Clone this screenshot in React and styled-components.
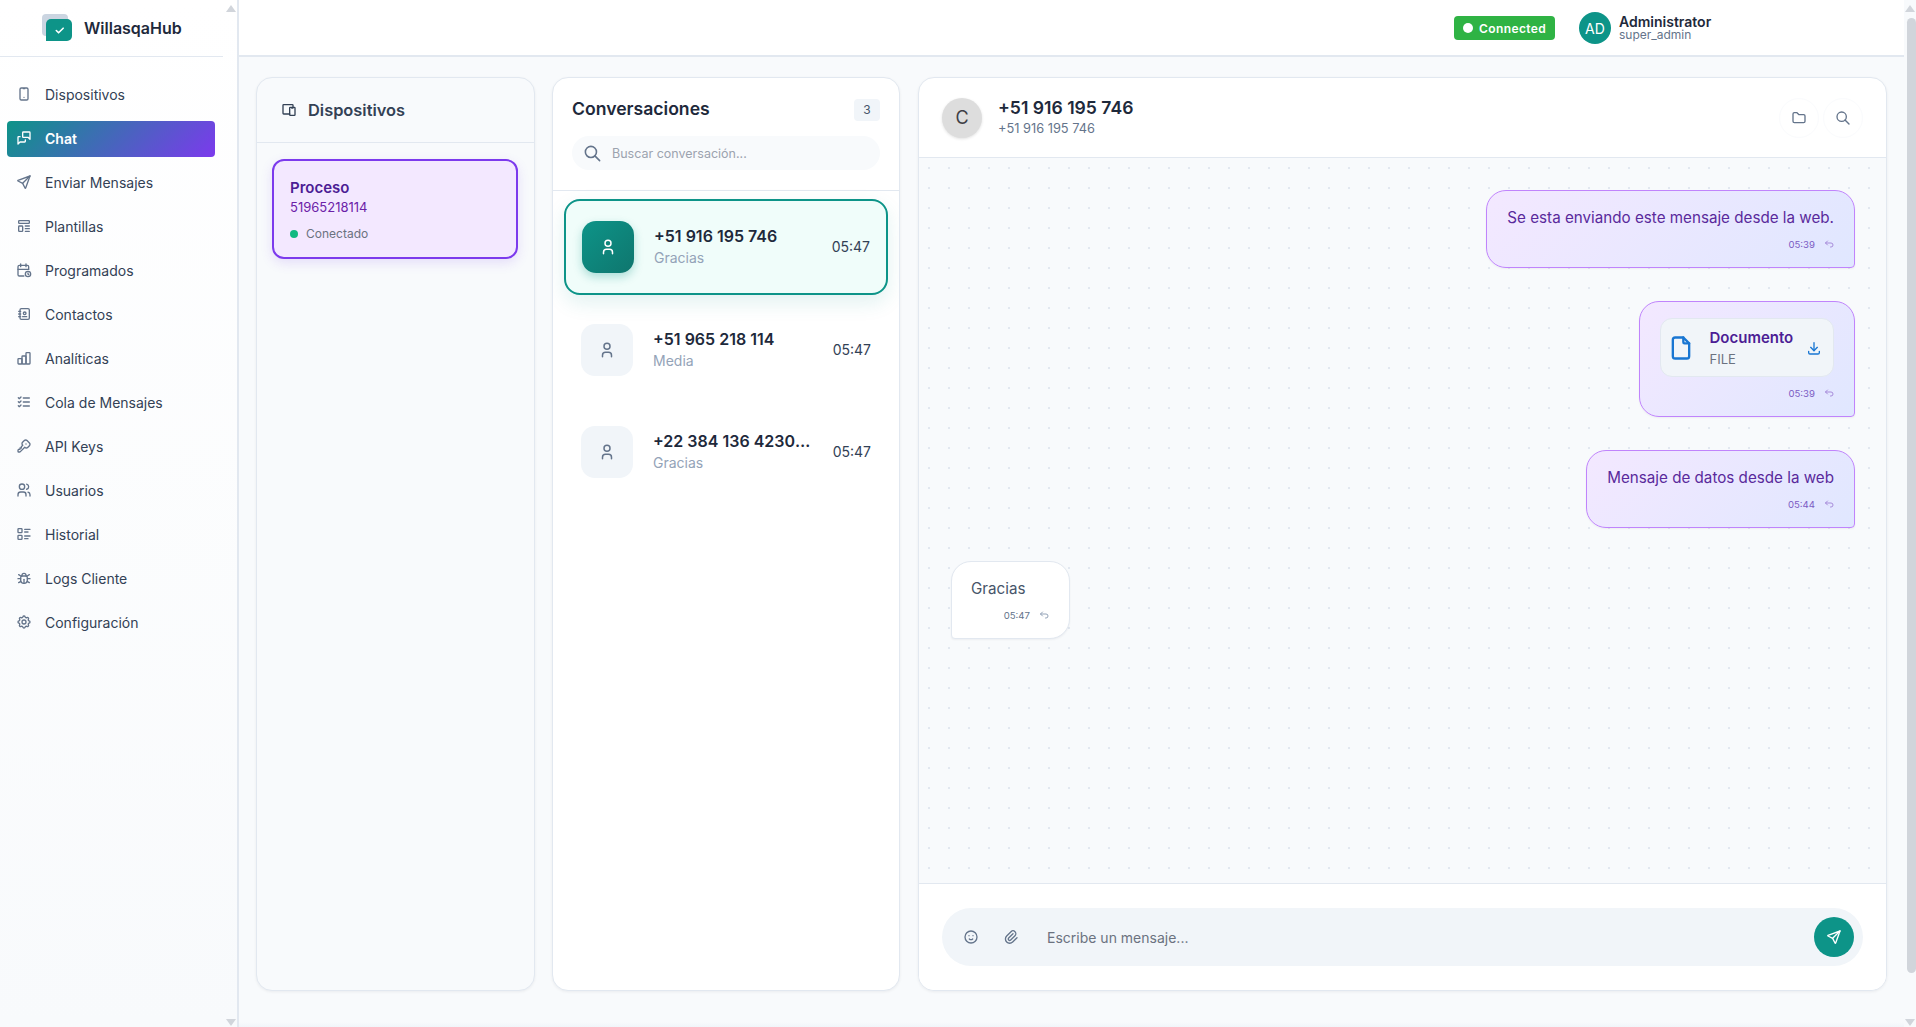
import React from 'react';
import styled, {createGlobalStyle} from 'styled-components';
import {
  TbDeviceMobile, TbMessages, TbSend, TbTemplate, TbCalendarTime, TbAddressBook,
  TbListCheck, TbKey, TbUsers, TbListDetails, TbBug, TbSettings,
  TbDevices, TbFolder, TbSearch, TbMoodSmile, TbPaperclip, TbUser, TbDownload,
  TbFile, TbArrowBackUp, TbCheck
} from 'react-icons/tb';

const GlobalStyle = createGlobalStyle`
  * { box-sizing: border-box; }
  html, body { margin: 0; height: 100%; overflow: hidden; }
  body {
    font-family: Inter, "Noto Sans", "Liberation Sans", sans-serif;
    background: #f8fafc;
    color: #1e293b;
  }
  input { font-family: inherit; }
`;

const Shell = styled.div`
  display: flex;
  height: 100vh;
`;

const Sidebar = styled.aside`
  width: 239px;
  flex: none;
  display: flex;
  background: linear-gradient(180deg, #ffffff 0%, #f8fafc 100%);
  border-right: 2px solid #e2e8f0;
`;

const SideInner = styled.div`
  width: 225px;
  flex: none;
`;

const Brand = styled.div`
  height: 57px;
  margin-right: 2px;
  display: flex;
  align-items: center;
  padding-left: 42px;
  gap: 12px;
  border-bottom: 1px solid #e2e8f0;
`;

const LogoMark = styled.div`
  position: relative;
  width: 30px;
  height: 27px;
  flex: none;
  margin-top: -1px;
  &::before {
    content: '';
    position: absolute;
    left: 0;
    top: 0;
    width: 26px;
    height: 22px;
    border-radius: 4px;
    background: #cbd5e1;
  }
`;

const LogoFront = styled.div`
  position: absolute;
  left: 4px;
  top: 5px;
  width: 26px;
  height: 22px;
  border-radius: 5px 5px 5px 0;
  background: #0d9488;
  color: #fff;
  display: flex;
  align-items: center;
  justify-content: center;
  font-size: 11px;
`;

const BrandName = styled.span`
  font-size: 16px;
  font-weight: 600;
  color: #1e293b;
`;

const Nav = styled.nav`
  display: flex;
  flex-direction: column;
  gap: 8px;
  padding: 20px 10px 0 7px;
`;

const NavItem = styled.a`
  height: 36px;
  display: flex;
  align-items: center;
  gap: 13px;
  padding: 0 9px 2px;
  border-radius: 4px;
  font-size: 14px;
  font-weight: ${p => (p.$active ? 600 : 400)};
  color: ${p => (p.$active ? '#ffffff' : '#334155')};
  background: ${p => (p.$active ? 'linear-gradient(135deg, #0d9488 0%, #7c3aed 100%)' : 'transparent')};
  svg { font-size: 16px; flex: none; color: ${p => (p.$active ? '#ffffff' : '#64748b')}; }
`;

const Rail = styled.div`
  width: ${p => p.$width}px;
  flex: none;
  display: flex;
  flex-direction: column;
  align-items: center;
  padding: 5px 0 1px;
  background: ${p => p.$bg || 'transparent'};
`;

const Arrow = styled.div`
  width: 0;
  height: 0;
  flex: none;
  border-left: 5px solid transparent;
  border-right: 5px solid transparent;
  ${p => (p.$down
    ? 'border-top: 7px solid #d1d5db; margin-top: auto;'
    : 'border-bottom: 7px solid #d1d5db;')}
`;

const Thumb = styled.div`
  width: 9px;
  height: 955px;
  margin: 6px 0 0 3px;
  flex: none;
  border-radius: 5px;
  background: #d1d5db;
`;

const Main = styled.div`
  flex: 1;
  min-width: 0;
  display: flex;
  flex-direction: column;
  background: linear-gradient(180deg, #f8fafc calc(100% - 5px), #f1f5f9 100%);
`;

const TopBar = styled.header`
  height: 57px;
  flex: none;
  background: #fff;
  border-bottom: 2px solid #e2e8f0;
  display: flex;
  align-items: center;
  justify-content: flex-end;
  padding: 1px 190px 0 0;
`;

const StatusBadge = styled.div`
  width: 101px;
  height: 24px;
  margin-right: 24px;
  display: flex;
  align-items: center;
  gap: 6px;
  padding-left: 9px;
  border-radius: 4px;
  background: #2fb344;
  color: #fff;
  font-size: 12px;
  font-weight: 600;
  letter-spacing: 0.4px;
`;

const StatusDot = styled.span`
  width: 10px;
  height: 10px;
  border-radius: 50%;
  background: #fff;
`;

const UserBox = styled.div`
  display: flex;
  align-items: center;
  gap: 8px;
`;

const UserAvatar = styled.div`
  width: 32px;
  height: 32px;
  border-radius: 50%;
  background: #0d9488;
  color: #fff;
  display: flex;
  align-items: center;
  justify-content: center;
  font-size: 14px;
`;

const UserText = styled.div`
  width: 95px;
  display: flex;
  flex-direction: column;
`;

const UserName = styled.span`
  font-size: 14px;
  font-weight: 600;
  line-height: 14px;
  color: #1e293b;
`;

const UserRole = styled.span`
  font-size: 12px;
  line-height: 12px;
  color: #64748b;
`;

const Content = styled.main`
  flex: 1;
  min-height: 0;
  display: grid;
  grid-template-columns: 279px 348px 1fr;
  column-gap: 17px;
  padding: 20px 17px 36px;
`;

const Panel = styled.section`
  min-height: 0;
  display: flex;
  flex-direction: column;
  overflow: hidden;
  border: 1px solid #e2e8f0;
  border-radius: 16px;
  background: ${p => (p.$muted ? '#f8fafc' : '#ffffff')};
  box-shadow: 0 1px 3px rgba(15, 23, 42, 0.06);
`;

const ChatPanel = styled(Panel)`
  margin-left: 1px;
`;

const DeviceHeader = styled.div`
  height: 65px;
  flex: none;
  display: flex;
  align-items: center;
  gap: 11px;
  padding-left: 24px;
  border-bottom: 1px solid #e2e8f0;
  font-size: 16.4px;
  font-weight: 600;
  color: #334155;
  svg { font-size: 16px; }
`;

const DeviceCard = styled.div`
  height: 100px;
  margin: 16px 16px 0 15px;
  padding: 17px 16px 0;
  border: 2px solid #7c3aed;
  border-radius: 12px;
  background: #f3e8ff;
  box-shadow: 0 4px 12px rgba(124, 58, 237, 0.15);
`;

const DeviceName = styled.div`
  font-size: 15px;
  font-weight: 600;
  line-height: 20px;
  color: #4c1d95;
`;

const DeviceNumber = styled.div`
  font-size: 13px;
  line-height: 18px;
  color: #6b21a8;
`;

const DeviceStatus = styled.div`
  margin-top: 9px;
  display: flex;
  align-items: center;
  gap: 8px;
  font-size: 12px;
  line-height: 18px;
  color: #6b7280;
`;

const GreenDot = styled.span`
  width: 8px;
  height: 8px;
  border-radius: 50%;
  background: #10b981;
`;

const ConvHeader = styled.div`
  height: 113px;
  flex: none;
  padding: 18px 19px 0;
  border-bottom: 1px solid #e2e8f0;
`;

const ConvTitleRow = styled.div`
  height: 24px;
  display: flex;
  align-items: center;
  justify-content: space-between;
`;

const ConvTitle = styled.h2`
  margin: 0;
  font-size: 17.6px;
  font-weight: 600;
  color: #1e293b;
`;

const CountBadge = styled.span`
  width: 26px;
  height: 22px;
  margin-top: 3px;
  border-radius: 4px;
  background: #f1f5f9;
  color: #475569;
  display: flex;
  align-items: center;
  justify-content: center;
  font-size: 12px;
`;

const SearchBox = styled.div`
  height: 34px;
  margin-top: 16px;
  display: flex;
  align-items: center;
  gap: 10px;
  padding-left: 11px;
  border-radius: 17px;
  background: #f8fafc;
  color: #64748b;
  svg { font-size: 19px; flex: none; }
`;

const SearchInput = styled.input`
  flex: 1;
  min-width: 0;
  padding: 0;
  border: 0;
  outline: 0;
  background: transparent;
  font-size: 12.5px;
  &::placeholder { color: #9ca3af; opacity: 1; }
`;

const ConvList = styled.div`
  display: flex;
  flex-direction: column;
  gap: 8px;
  padding: 8px 11px 0;
`;

const ConvRow = styled.div`
  height: ${p => (p.$selected ? 96 : 94)}px;
  margin: 0 ${p => (p.$selected ? 0 : 1)}px;
  display: flex;
  align-items: center;
  gap: 20px;
  padding: 0 16px;
  border-radius: 16px;
  border: ${p => (p.$selected ? '2px solid #0d9488' : '0')};
  background: ${p => (p.$selected ? '#f0fdfa' : 'transparent')};
  box-shadow: ${p => (p.$selected ? '0 8px 20px rgba(13, 148, 136, 0.12)' : 'none')};
`;

const ConvAvatar = styled.div`
  width: 52px;
  height: 52px;
  flex: none;
  border-radius: 14px;
  display: flex;
  align-items: center;
  justify-content: center;
  font-size: 18px;
  color: ${p => (p.$selected ? '#ffffff' : '#64748b')};
  background: ${p => (p.$selected ? 'linear-gradient(135deg, #0d9488, #0f766e)' : '#f1f5f9')};
  box-shadow: ${p => (p.$selected ? '0 4px 10px rgba(13, 148, 136, 0.3)' : 'none')};
`;

const ConvInfo = styled.div`
  flex: 1;
  min-width: 0;
  margin-bottom: 0;
`;

const ConvName = styled.div`
  font-size: 16px;
  font-weight: 600;
  line-height: 22px;
  color: #1e293b;
  white-space: nowrap;
  overflow: hidden;
  text-overflow: ellipsis;
`;

const ConvPreview = styled.div`
  font-size: 14px;
  line-height: 22px;
  color: #94a3b8;
`;

const ConvTime = styled.span`
  flex: none;
  margin-bottom: 2px;
  font-size: 14px;
  color: #334155;
`;

const ChatHeader = styled.div`
  height: 80px;
  flex: none;
  display: flex;
  align-items: center;
  gap: 16px;
  padding: 0 23px;
  border-bottom: 1px solid #e2e8f0;
`;

const ChatAvatar = styled.div`
  width: 40px;
  height: 40px;
  flex: none;
  border-radius: 50%;
  background: #dddddd;
  box-shadow: 0 1px 3px rgba(0, 0, 0, 0.12);
  color: #3f3f46;
  display: flex;
  align-items: center;
  justify-content: center;
  font-size: 18px;
`;

const ChatTitle = styled.div`
  flex: 1;
  min-width: 0;
`;

const ChatName = styled.div`
  font-size: 17.6px;
  font-weight: 600;
  line-height: 22px;
  color: #1e293b;
`;

const ChatPhone = styled.div`
  margin-top: 1px;
  font-size: 12.8px;
  line-height: 18px;
  color: #64748b;
`;

const RoundButton = styled.button`
  width: 40px;
  height: 40px;
  flex: none;
  padding: 0;
  border: 1px solid #fafbfd;
  border-radius: 50%;
  background: #fff;
  color: #64748b;
  display: flex;
  align-items: center;
  justify-content: center;
  font-size: 16px;
  margin-left: ${p => (p.$tight ? -12 : 0)}px;
`;

const Messages = styled.div`
  flex: 1;
  min-height: 0;
  display: flex;
  flex-direction: column;
  gap: 33px;
  padding: 32px 31px 0 32px;
  background-color: #f8fafc;
  background-image: radial-gradient(circle, #e2e8f0 1px, transparent 1px);
  background-size: 20px 20px;
`;

const Bubble = styled.div`
  align-self: ${p => (p.$mine ? 'flex-end' : 'flex-start')};
  min-width: 119px;
  padding: 16px 20px 14px ${p => (p.$mine ? 20 : 19)}px;
  border: 1px solid ${p => (p.$mine ? '#c084fc' : '#e2e8f0')};
  border-radius: ${p => (p.$mine ? '20px 20px 4px 20px' : '20px 20px 20px 4px')};
  background: ${p => (p.$mine ? 'linear-gradient(135deg, #f3e8ff, #e0e7ff)' : '#ffffff')};
  box-shadow: 0 1px 2px rgba(15, 23, 42, 0.05);
  color: ${p => (p.$mine ? '#5a2a9c' : '#475569')};
`;

const BubbleText = styled.div`
  font-size: 15.2px;
  line-height: 21px;
`;

const Meta = styled.div`
  height: 18px;
  margin-top: 7px;
  display: flex;
  align-items: center;
  justify-content: flex-end;
  gap: 8px;
  font-size: 9.6px;
  color: ${p => (p.$mine ? '#7c5cc4' : '#64748b')};
  svg {
    font-size: 12px;
    margin-right: -1px;
    color: ${p => (p.$mine ? '#a78bda' : '#94a3b8')};
  }
`;

const FileCard = styled.div`
  width: 174.5px;
  height: 59px;
  display: flex;
  align-items: center;
  gap: 15px;
  padding-left: 6px;
  border: 1px solid #e2e8f0;
  border-radius: 12px;
  background: #f1f5f9;
  color: #1976d2;
  > svg:first-child { font-size: 28px; flex: none; }
`;

const FileText = styled.div`
  flex: 1;
  min-width: 0;
`;

const FileName = styled.div`
  font-size: 15px;
  font-weight: 600;
  line-height: 22px;
  color: #4c1d95;
`;

const FileKind = styled.div`
  font-size: 13px;
  line-height: 20px;
  color: #6b7280;
`;

const FileDownload = styled.span`
  display: flex;
  margin-right: 11px;
  font-size: 16px;
`;

const Composer = styled.div`
  height: 107px;
  flex: none;
  padding: 24px 23px 0;
  border-top: 1px solid #e2e8f0;
  background: #fff;
`;

const ComposerPill = styled.div`
  height: 58px;
  display: flex;
  align-items: center;
  padding: 0 9px;
  border-radius: 29px;
  background: #f1f5f9;
`;

const ToolButton = styled.button`
  width: 40px;
  height: 40px;
  flex: none;
  padding: 0;
  border: 0;
  background: transparent;
  color: #64748b;
  display: flex;
  align-items: center;
  justify-content: center;
  font-size: 16px;
`;

const MessageInput = styled.input`
  flex: 1;
  min-width: 0;
  margin-left: 16px;
  padding: 0;
  border: 0;
  outline: 0;
  background: transparent;
  font-size: 14px;
  &::placeholder { color: #6b7280; opacity: 1; }
`;

const SendButton = styled.button`
  width: 40px;
  height: 40px;
  flex: none;
  padding: 0;
  border: 0;
  border-radius: 50%;
  background: #0d9488;
  color: #fff;
  display: flex;
  align-items: center;
  justify-content: center;
  font-size: 16px;
`;

// rising outlined bars, the tb chart icon has the tall bar in the middle
const BarsIcon = () => (
  <svg width="1em" height="1em" viewBox="0 0 24 24" fill="none" stroke="currentColor" strokeWidth="2" strokeLinecap="round" strokeLinejoin="round">
    <rect x="3" y="13" width="6" height="8" rx="1" />
    <rect x="9" y="9" width="6" height="12" rx="1" />
    <rect x="15" y="4" width="6" height="17" rx="1" />
  </svg>
);

const navItems = [
  {label: 'Dispositivos', icon: TbDeviceMobile},
  {label: 'Chat', icon: TbMessages, active: true},
  {label: 'Enviar Mensajes', icon: TbSend},
  {label: 'Plantillas', icon: TbTemplate},
  {label: 'Programados', icon: TbCalendarTime},
  {label: 'Contactos', icon: TbAddressBook},
  {label: 'Analíticas', icon: BarsIcon},
  {label: 'Cola de Mensajes', icon: TbListCheck},
  {label: 'API Keys', icon: TbKey},
  {label: 'Usuarios', icon: TbUsers},
  {label: 'Historial', icon: TbListDetails},
  {label: 'Logs Cliente', icon: TbBug},
  {label: 'Configuración', icon: TbSettings}
];

const conversations = [
  {name: '+51 916 195 746', preview: 'Gracias', time: '05:47', selected: true},
  {name: '+51 965 218 114', preview: 'Media', time: '05:47'},
  {name: '+22 384 136 42301234', preview: 'Gracias', time: '05:47'}
];

const BubbleMeta = ({mine, time}) => (
  <Meta $mine={mine}>
    {time}
    <TbArrowBackUp />
  </Meta>
);

export default function App() {
  return (
    <Shell>
      <GlobalStyle />
      <Sidebar>
        <SideInner>
          <Brand>
            <LogoMark>
              <LogoFront><TbCheck strokeWidth={3.5} /></LogoFront>
            </LogoMark>
            <BrandName>WillasqaHub</BrandName>
          </Brand>
          <Nav>
            {navItems.map(({label, icon: Icon, active}) => (
              <NavItem key={label} $active={active}>
                <Icon />
                {label}
              </NavItem>
            ))}
          </Nav>
        </SideInner>
        <Rail $width={12}>
          <Arrow />
          <Arrow $down />
        </Rail>
      </Sidebar>

      <Main>
        <TopBar>
          <StatusBadge>
            <StatusDot />
            Connected
          </StatusBadge>
          <UserBox>
            <UserAvatar>AD</UserAvatar>
            <UserText>
              <UserName>Administrator</UserName>
              <UserRole>super_admin</UserRole>
            </UserText>
          </UserBox>
        </TopBar>

        <Content>
          <Panel $muted>
            <DeviceHeader>
              <TbDevices />
              Dispositivos
            </DeviceHeader>
            <DeviceCard>
              <DeviceName>Proceso</DeviceName>
              <DeviceNumber>51965218114</DeviceNumber>
              <DeviceStatus>
                <GreenDot />
                Conectado
              </DeviceStatus>
            </DeviceCard>
          </Panel>

          <Panel>
            <ConvHeader>
              <ConvTitleRow>
                <ConvTitle>Conversaciones</ConvTitle>
                <CountBadge>3</CountBadge>
              </ConvTitleRow>
              <SearchBox>
                <TbSearch />
                <SearchInput placeholder="Buscar conversación..." />
              </SearchBox>
            </ConvHeader>
            <ConvList>
              {conversations.map(c => (
                <ConvRow key={c.name} $selected={c.selected}>
                  <ConvAvatar $selected={c.selected}><TbUser /></ConvAvatar>
                  <ConvInfo>
                    <ConvName>{c.name}</ConvName>
                    <ConvPreview>{c.preview}</ConvPreview>
                  </ConvInfo>
                  <ConvTime>{c.time}</ConvTime>
                </ConvRow>
              ))}
            </ConvList>
          </Panel>

          <ChatPanel>
            <ChatHeader>
              <ChatAvatar>C</ChatAvatar>
              <ChatTitle>
                <ChatName>+51 916 195 746</ChatName>
                <ChatPhone>+51 916 195 746</ChatPhone>
              </ChatTitle>
              <RoundButton><TbFolder /></RoundButton>
              <RoundButton $tight><TbSearch /></RoundButton>
            </ChatHeader>

            <Messages>
              <Bubble $mine>
                <BubbleText>Se esta enviando este mensaje desde la web.</BubbleText>
                <BubbleMeta mine time="05:39" />
              </Bubble>
              <Bubble $mine>
                <FileCard>
                  <TbFile />
                  <FileText>
                    <FileName>Documento</FileName>
                    <FileKind>FILE</FileKind>
                  </FileText>
                  <FileDownload><TbDownload /></FileDownload>
                </FileCard>
                <BubbleMeta mine time="05:39" />
              </Bubble>
              <Bubble $mine>
                <BubbleText>Mensaje de datos desde la web</BubbleText>
                <BubbleMeta mine time="05:44" />
              </Bubble>
              <Bubble>
                <BubbleText>Gracias</BubbleText>
                <BubbleMeta time="05:47" />
              </Bubble>
            </Messages>

            <Composer>
              <ComposerPill>
                <ToolButton><TbMoodSmile /></ToolButton>
                <ToolButton><TbPaperclip /></ToolButton>
                <MessageInput placeholder="Escribe un mensaje..." />
                <SendButton><TbSend /></SendButton>
              </ComposerPill>
            </Composer>
          </ChatPanel>
        </Content>
      </Main>

      <Rail $width={12} $bg="#f8fafc">
        <Arrow />
        <Thumb />
        <Arrow $down />
      </Rail>
    </Shell>
  );
}
